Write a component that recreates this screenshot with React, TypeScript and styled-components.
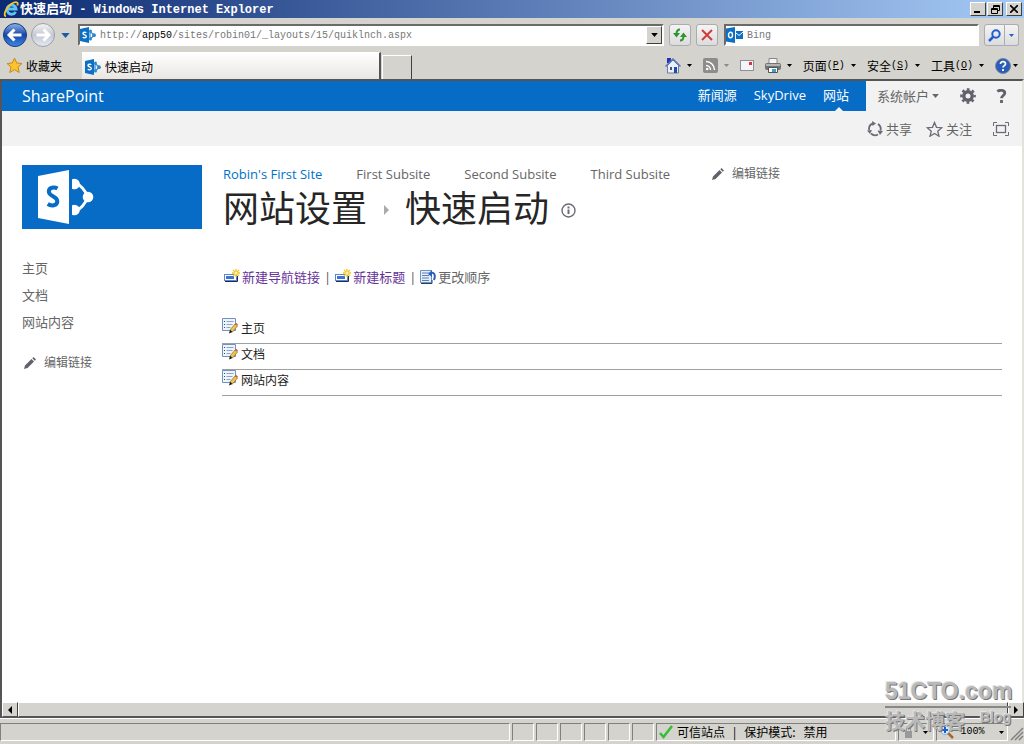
import React from "react";
import styled, { createGlobalStyle, css } from "styled-components";

const uiFont = `"Noto Sans CJK SC", "Liberation Sans", sans-serif`;
const webFont = `"Open Sans", "Noto Sans CJK SC", sans-serif`;
const monoFont = `"Liberation Mono", "Noto Sans CJK SC", monospace`;
const blue = "#066cc6";
const face = "#d4d3cd";

const Global = createGlobalStyle`
  * { box-sizing: border-box; }
  body { margin: 0; background: ${face}; font: 12px/16px ${uiFont}; color: #000; }
  button { font: inherit; color: inherit; padding: 0; border: 0; background: none; }
  a { color: inherit; text-decoration: none; }
  ul { list-style: none; margin: 0; padding: 0; }
  svg { display: block; flex: none; }
`;

const Window = styled.div`
  min-height: 100vh;
  display: flex;
  flex-direction: column;
`;

/* ---------- browser chrome ---------- */

const TitleBar = styled.header`
  height: 18px;
  padding: 0 2px 0 3px;
  display: flex;
  align-items: center;
  gap: 1px;
  color: #fff;
  font-weight: bold;
  white-space: pre;
  background: linear-gradient(90deg, #0c2a72, #a6caf6);
`;
const TitleText = styled.h2`
  flex: 1;
  margin: 0;
  font: bold 12px/18px ${monoFont};
  span { font: bold 13px/18px ${uiFont}; }
`;
const CaptionButton = styled.button<{ $apart?: boolean }>`
  width: 16px;
  height: 14px;
  margin-left: ${(p) => (p.$apart ? 2 : 0)}px;
  display: grid;
  place-items: center;
  background: ${face};
  border: 1px solid;
  border-color: #fff #404040 #404040 #fff;
`;

const AddressRow = styled.div`
  height: 34px;
  padding: 0 5px 0 2px;
  display: flex;
  align-items: center;
`;
const NavCluster = styled.div`
  display: flex;
  align-items: center;
  gap: 2px;
  margin-right: 5px;
`;
const RecentButton = styled.button`
  width: 15px;
  display: grid;
  place-items: center;
`;
const sunken = css`
  border: 2px solid;
  border-color: #6a6a6a #fff #fff #6a6a6a;
  background: #fff;
`;
const Field = styled.label<{ $width?: number }>`
  ${sunken}
  height: 22px;
  ${(p) => (p.$width ? `width: ${p.$width}px;` : "flex: 1;")}
  display: flex;
  align-items: center;
  gap: 4px;
  min-width: 0;
`;
const FieldInput = styled.input`
  flex: 1;
  min-width: 0;
  border: 0;
  outline: 0;
  padding: 2px 0 0;
  background: none;
  font: 10px/16px ${monoFont};
  color: #555;
  &::placeholder { color: #777; opacity: 1; }
`;
const UrlText = styled.div`
  flex: 1;
  padding-top: 2px;
  font: 10px/16px ${monoFont};
  color: #777;
  b { font-weight: normal; color: #000; }
`;
const DropButton = styled.button`
  width: 16px;
  height: 18px;
  display: grid;
  place-items: center;
  background: ${face};
  border: 1px solid;
  border-color: #fff #404040 #404040 #fff;
`;
const PageButtons = styled.div`
  display: flex;
  gap: 5px;
  margin: 0 6px 0 5px;
`;
const SoftButton = styled.button`
  height: 22px;
  width: 22px;
  display: grid;
  place-items: center;
  border: 1px solid #a9abb5;
  border-radius: 3px;
  background: linear-gradient(#f4f4f4, #dcdcdc);
`;
const SearchButtons = styled.div`
  display: flex;
  margin-left: 5px;
`;
const SearchPart = styled.button<{ $width: number }>`
  width: ${(p) => p.$width}px;
  height: 22px;
  display: grid;
  place-items: center;
  border: 1px solid #a9abb5;
  background: linear-gradient(#f4f4f4, #dcdcdc);
  &:first-child { border-radius: 3px 0 0 3px; }
  &:last-child { border-radius: 0 3px 3px 0; border-left: 0; }
`;

const TabRow = styled.div`
  height: 27px;
  padding: 0 6px;
  display: flex;
  align-items: center;
`;
const Favorites = styled.button`
  width: 76px;
  display: flex;
  align-items: center;
  gap: 3px;
`;
const Tab = styled.button`
  width: 299px;
  height: 27px;
  padding: 2px 0 0 3px;
  display: flex;
  align-items: center;
  gap: 4px;
  border-right: 2px solid #555;
  border-top: 1px solid #fff;
  background: linear-gradient(#fff, #e8e6e2);
`;
const NewTab = styled.button`
  width: 30px;
  height: 24px;
  margin-left: 1px;
  align-self: flex-end;
  border: 1px solid #fff;
  border-right: 1px solid #404040;
  border-bottom: 0;
`;
const Commands = styled.div`
  flex: 1;
  display: flex;
  align-items: center;
  justify-content: flex-end;
  gap: 11px;
`;
const Command = styled.button<{ $tight?: boolean }>`
  display: flex;
  align-items: center;
  gap: ${(p) => (p.$tight ? 2 : 6)}px;
  white-space: nowrap;
`;
const AccessKey = styled.span`
  font: 10px/16px ${monoFont};
`;
const MenuLabel = styled.span`
  display: flex;
  align-items: center;
`;

/* ---------- SharePoint page ---------- */

const Viewport = styled.div`
  flex: 1;
  display: flex;
  flex-direction: column;
  background: #fff;
  border: solid #555;
  border-width: 2px 0 0 2px;
  border-right: 2px solid #e4e2dc;
`;
const Suite = styled.div`
  height: 30px;
  display: flex;
  background: ${blue};
  color: #fff;
`;
const Brand = styled.a`
  flex: 1;
  padding-left: 20px;
  font: 16px/30px ${webFont};
`;
const SuiteLinks = styled.nav`
  display: flex;
  gap: 17px;
  padding-right: 17px;
  font: 13px/28px ${webFont};
`;
const SuiteLink = styled.a<{ $active?: boolean }>`
  position: relative;
  ${(p) =>
    p.$active &&
    css`
      &::after {
        content: "";
        position: absolute;
        left: 50%;
        bottom: 0;
        margin-left: -1px;
        border: 4px solid transparent;
        border-top: 0;
        border-bottom-color: #f2f2f2;
      }
    `}
`;
const Account = styled.div`
  width: 156px;
  padding: 0 15px 0 11px;
  display: flex;
  align-items: center;
  justify-content: space-between;
  background: #f2f2f2;
  color: #666;
  font: 13px/28px ${webFont};
`;
const IconButton = styled.button`
  display: flex;
  align-items: center;
  gap: 3px;
`;
const Ribbon = styled.div`
  height: 35px;
  padding: 0 13px;
  display: flex;
  align-items: center;
  justify-content: flex-end;
  gap: 14px;
  background: #f2f2f2;
  color: #666;
  font: 13px/18px ${webFont};
`;
const Focus = styled(IconButton)`
  margin-left: 7px;
`;

const Page = styled.div`
  flex: 1;
  display: grid;
  grid-template-columns: 180px 1fr;
  grid-template-rows: auto 1fr;
  column-gap: 20px;
  padding: 16px 20px 20px;
  color: #666;
  font: 13px/18px ${webFont};
`;
const Logo = styled.a`
  height: 64px;
  margin-top: 3px;
  padding-left: 15px;
  display: flex;
  align-items: center;
  background: ${blue};
`;
const TopNav = styled.nav`
  display: flex;
  gap: 34px;
  padding-left: 1px;
  font: 13px/24px ${webFont};
`;
const TopLink = styled.a<{ $current?: boolean }>`
  color: ${(p) => (p.$current ? "#0072c6" : "#666")};
`;
const EditLink = styled.a<{ $indent: number }>`
  margin-left: ${(p) => p.$indent}px;
  display: flex;
  align-items: center;
  gap: 8px;
  font-size: 12px;
`;
const PageTitle = styled.h1`
  margin: 0;
  padding-left: 1px;
  display: flex;
  align-items: center;
  font: 36px/40px ${uiFont};
  color: #262626;
`;
const Crumb = styled.span`
  width: 38px;
  padding-top: 8px;
  display: grid;
  place-items: center;
`;
const Info = styled.button`
  padding: 8px 0 0 12px;
`;
const Side = styled.aside`
  padding-top: 26px;
  line-height: 27px;
  ul { margin-bottom: 13px; }
`;
const Main = styled.main`
  padding-top: 38px;
`;
const Actions = styled.div`
  height: 20px;
  padding-left: 2px;
  display: flex;
  align-items: center;
  gap: 4px;
  color: #555;
`;
const Action = styled.a<{ $visited?: boolean }>`
  display: flex;
  align-items: center;
  gap: 2px;
  color: ${(p) => (p.$visited ? "#663399" : "#666")};
`;
const Items = styled.ul`
  margin-top: 31px;
  color: #222;
`;
const Item = styled.li`
  height: 26px;
  border-bottom: 1px solid #a0a0a0;
  a { display: flex; gap: 3px; font-size: 12px; line-height: 22px; }
`;

/* ---------- bottom of the window ---------- */

const Frame = styled.div`
  position: relative;
`;
const ScrollBar = styled.div`
  height: 16px;
  display: flex;
  border-left: 2px solid #555;
  border-bottom: 1px solid #555;
`;
const Raised = styled.button<{ $grow?: boolean }>`
  ${(p) => (p.$grow ? "flex: 1;" : "width: 16px;")}
  display: grid;
  place-items: center;
  background: ${face};
  border: 1px solid;
  border-color: #fff #404040 #555 #fff;
`;
const StatusBar = styled.footer`
  height: 26px;
  padding: 4px 0 3px;
  display: flex;
  border-top: 1px solid #fff;
`;
const Panel = styled.div<{ $width?: number }>`
  ${(p) => (p.$width ? `width: ${p.$width}px;` : "flex: 1;")}
  display: flex;
  align-items: center;
  margin-right: 2px;
  border: 1px solid;
  border-color: #808080 #fff #fff #808080;
  white-space: nowrap;
`;
const Zone = styled(Panel)`
  gap: 8px;
`;
const ZoneName = styled.span`
  display: flex;
  align-items: center;
  gap: 4px;
  padding-left: 2px;
`;
const ZoomPanel = styled(Panel)`
  justify-content: space-around;
`;
const Percent = styled.span`
  margin-right: 8px;
  font: 10px/16px ${monoFont};
`;
const Watermark = styled.div`
  position: absolute;
  right: 13px;
  bottom: 10px;
  width: 126px;
  color: #b9b9b9;
  text-shadow: 1px 1px 0 #777, -1px -1px 0 #e4e4e4;
  font: bold 23px/30px "Liberation Sans", sans-serif;
  pointer-events: none;
  white-space: nowrap;
`;
const WatermarkSub = styled.div`
  display: flex;
  justify-content: space-between;
  border-top: 2px solid #888;
  font: bold 20px/26px "Noto Sans CJK SC", sans-serif;
  span { font: bold 14px/18px "Liberation Sans", sans-serif; }
`;

/* ---------- icons ---------- */

const Caret = ({ color = "#000", size = 5 }: { color?: string; size?: number }) => (
  <svg width={size} height={Math.ceil(size / 2)} viewBox="0 0 10 6"><path d="M0 0h10L5 6z" fill={color} /></svg>
);

const IeIcon = () => (
  <svg width="16" height="16" viewBox="0 0 16 16" fill="none">
    <path d="M12.6 10.8a4.600 4.600 0 1 1 .5-2.800H4.500" stroke="#5fc3f5" strokeWidth="2.800" />
    <path d="M3 15.500C-.8 14 4 4.500 11 1.500c3-1.200 4.500.3 3.300 3" stroke="#f6c52e" strokeWidth="1.800" />
  </svg>
);

const SharePointMark = () => (
  <svg width="16" height="16" viewBox="0 0 16 16">
    <path d="M0 2 9 0v16L0 14z" fill="#0b6fc4" />
    <path d="M6.300 5.800C5.500 5 3 4.900 3 6.400c0 1.600 3.300 1.300 3.300 3.100 0 1.600-2.500 1.600-3.600.8" fill="none" stroke="#fff" strokeWidth="1.400" />
    <path d="M10 4.500l4.500 3.700L10 12M10 4v8" fill="none" stroke="#2b88d0" strokeWidth="1.200" />
    <circle cx="10.500" cy="4" r="1.500" fill="#2b88d0" />
    <circle cx="14" cy="8.200" r="1.900" fill="#2b88d0" />
    <circle cx="10.500" cy="12" r="1.500" fill="#2b88d0" />
  </svg>
);

const SiteLogo = () => (
  <svg width="57" height="56" viewBox="0 0 57 56">
    <defs><clipPath id="nodes"><path d="M35 0h22v56H35z" /></clipPath></defs>
    <path d="M1 7 32 1v54L1 49z" fill="#fff" />
    <path d="M20.500 19.500c-3-1.700-8.700-1.500-8.700 3 0 5.200 8.500 4.300 8.500 9.800 0 4.600-6 5-9.600 2.700" fill="none" stroke={blue} strokeWidth="4" />
    <g clipPath="url(#nodes)" fill="#fff">
      <circle cx="37.500" cy="15" r="5.300" />
      <circle cx="37.500" cy="41" r="5.300" />
      <circle cx="51" cy="28" r="5.300" />
      <path d="M39 14c6 3 9 7 12 14-3 7-6 11-12 14" fill="none" stroke="#fff" strokeWidth="3" />
    </g>
  </svg>
);

const RoundArrow = ({ back }: { back?: boolean }) => (
  <svg width="26" height="26" viewBox="0 0 26 26">
    <defs>
      <linearGradient id={back ? "gb" : "gf"} x1="0" y1="0" x2="0" y2="1">
        <stop offset="0" stopColor={back ? "#8fb4ea" : "#f4f4f6"} />
        <stop offset=".5" stopColor={back ? "#1546a8" : "#c3c8d2"} />
        <stop offset="1" stopColor={back ? "#3f8be6" : "#e6ebf2"} />
      </linearGradient>
    </defs>
    <circle cx="13" cy="13" r="11.500" fill={`url(#${back ? "gb" : "gf"})`} stroke={back ? "#1b3c80" : "#9a9ea8"} />
    <path
      d={back ? "M19.500 13H8M12.500 7.500 7 13l5.500 5.500" : "M6.500 13H18M13.500 7.500 19 13l-5.500 5.500"}
      fill="none"
      stroke="#fff"
      strokeWidth="3"
    />
  </svg>
);

const Star = () => (
  <svg width="17" height="17" viewBox="0 0 17 17">
    <path d="m8.500 1 2.200 5 5.300.5-4 3.600 1.200 5.400-4.700-2.800-4.700 2.800L5 10.100 1 6.500 6.300 6z" fill="#fdc22f" stroke="#c98a17" />
  </svg>
);

const OutlookIcon = () => (
  <svg width="17" height="16" viewBox="0 0 17 16">
    <path d="M0 1.500 9 0v16L0 14.500zM10 4h7v8h-7z" fill="#0b6fc4" />
    <ellipse cx="4.500" cy="8" rx="2" ry="2.700" fill="none" stroke="#fff" strokeWidth="1.400" />
    <path d="m10 6 3 2.500L17 5" fill="none" stroke="#fff" />
  </svg>
);

const RefreshIcon = () => (
  <svg width="16" height="14" viewBox="0 0 16 14" fill="none" stroke="#2c9630" strokeWidth="2">
    <path d="M8 1.500C5.500 1.500 4.500 3 4.500 6M8 12.500c2.500 0 3.500-1.500 3.500-4.500" />
    <path d="M1 5h7L4.500 9.500zM8 9h7l-3.500-4.500z" fill="#2c9630" stroke="none" />
  </svg>
);
const StopIcon = () => (
  <svg width="12" height="12" viewBox="0 0 12 12"><path d="m1 1 10 10M11 1 1 11" stroke="#d23b3b" strokeWidth="2" /></svg>
);
const SearchIcon = () => (
  <svg width="13" height="13" viewBox="0 0 13 13" fill="none" stroke="#1f5fd0">
    <circle cx="8" cy="5" r="3.700" strokeWidth="2" /><path d="M5.500 7.500 1 12" strokeWidth="2.500" />
  </svg>
);

const HomeIcon = () => (
  <svg width="16" height="16" viewBox="0 0 16 16">
    <path d="M2 0h4v5H2z" fill="#2333b8" />
    <path d="M2.500 7.500 8 2l5.500 5.500V15h-11z" fill="#e8eefb" stroke="#6c7ca6" />
    <path d="M.5 8.500 8 1l7.500 7.500" fill="none" stroke="#5d77b4" strokeWidth="1.500" />
    <path d="M9 9h3v6H9z" fill="#1f4da6" /><path d="M5 9h2v3H5z" fill="#555" />
  </svg>
);
const RssIcon = () => (
  <svg width="15" height="15" viewBox="0 0 15 15">
    <rect width="15" height="15" rx="2" fill="#8c8c8c" />
    <g fill="none" stroke="#fff" strokeWidth="1.500"><path d="M3 7.500a4.500 4.500 0 0 1 4.500 4.500M3 3.500A8.500 8.500 0 0 1 11.500 12" /></g>
    <circle cx="4.200" cy="11" r="1.300" fill="#fff" />
  </svg>
);
const MailIcon = () => (
  <svg width="14" height="11" viewBox="0 0 14 11">
    <rect x=".5" y=".5" width="13" height="10" fill="#f5f5f8" stroke="#8f8f9c" /><path d="M9 2h3v3H9z" fill="#d8343f" />
  </svg>
);
const PrinterIcon = () => (
  <svg width="16" height="15" viewBox="0 0 16 15">
    <path d="M4 .5h8v5H4z" fill="#f6f6f6" stroke="#888" />
    <rect y="5" width="16" height="7" rx="2" fill="#747474" /><path d="M1 6h14v2H1z" fill="#b4b4b4" />
    <path d="M3.500 9.500h9v5h-9z" fill="#fff" stroke="#555" /><path d="M7 11h4v3H7z" fill="#3d9fd0" />
  </svg>
);
const HelpIcon = () => (
  <svg width="16" height="16" viewBox="0 0 16 16">
    <circle cx="8" cy="8" r="7.500" fill="#2a5cb8" stroke="#7486a8" />
    <path d="M5.500 6c0-3.500 5.200-3 5 0-.1 1.600-2.500 1.700-2.500 3.500M8 11v2" fill="none" stroke="#fff" strokeWidth="1.800" />
  </svg>
);

const GearIcon = () => (
  <svg width="16" height="16" viewBox="0 0 16 16" fill="none" stroke="#62606a">
    <circle cx="8" cy="8" r="4.200" strokeWidth="3.400" />
    <circle cx="8" cy="8" r="6.600" strokeWidth="2.400" strokeDasharray="2.700 2.484" strokeDashoffset="1.350" />
  </svg>
);
const QuestionIcon = () => (
  <svg width="11" height="14" viewBox="0 0 11 14" fill="none" stroke="#62606a" strokeWidth="2.800">
    <path d="M1.300 2.300c2.500-1.700 7.500-1.200 7.500 1.700C8.800 6.500 5.500 6.500 5.500 9.300M5.500 11v3" />
  </svg>
);
const ShareIcon = () => (
  <svg width="16" height="16" viewBox="0 0 16 16" fill="none" stroke="#6c6a76" strokeWidth="1.800">
    <path d="M6 2.300A6 6 0 0 0 2.200 9M4 12.500a6 6 0 0 0 7 1M13.500 9.500A6 6 0 0 0 11 3" />
    <path d="M5 0l4 2.500L5.500 5zM0 9.500l5-.5-2 4zM10.500 9.500l5.500.5-3 4z" fill="#6c6a76" stroke="none" />
  </svg>
);
const FollowIcon = () => (
  <svg width="17" height="16" viewBox="0 0 17 16">
    <path d="m8.500 1.500 2 4.800 5.300.4-4.100 3.500 1.300 5-4.500-2.700L4 15.200l1.300-5L1.200 6.700l5.300-.4z" fill="none" stroke="#6c6a76" strokeWidth="1.300" />
  </svg>
);
const FocusIcon = () => (
  <svg width="16" height="14" viewBox="0 0 16 14" fill="none" stroke="#6c6a76">
    <path d="M4 .5H.5V4M12 .5h3.500V4M4 13.500H.5V10M12 13.500h3.500V10" /><rect x="3.500" y="3.500" width="9" height="7" strokeWidth="1.300" />
  </svg>
);
const PencilIcon = () => (
  <svg width="12" height="12" viewBox="0 0 12 12">
    <path d="m0 12 1-3.500L7.500 2 10 4.500 3.500 11zM8.300 1.200 9.500 0 12 2.500l-1.200 1.200z" fill="#62606a" />
  </svg>
);
const InfoIcon = () => (
  <svg width="15" height="15" viewBox="0 0 15 15">
    <circle cx="7.500" cy="7.500" r="6.500" fill="none" stroke="#6c6a76" strokeWidth="1.400" />
    <path d="M6.500 3.500h2v2h-2zM6.500 6.500h2V11h-2z" fill="#6c6a76" />
  </svg>
);
const NewIcon = () => (
  <svg width="16" height="16" viewBox="0 0 16 16">
    <rect x=".5" y="5.500" width="12" height="6" fill="#fff" stroke="#5b86d0" />
    <path d="M2 7h8v3H2z" fill="#3f70d8" /><path d="M1 12.500h12.500V7" fill="none" stroke="#1f2b50" />
    <path d="M12 0v8M8 4h8M9 1l6 6M15 1 9 7" stroke="#f0c92c" strokeWidth="1.400" />
    <circle cx="12" cy="4" r="1.500" fill="#fff6b0" />
  </svg>
);
const ReorderIcon = () => (
  <svg width="16" height="16" viewBox="0 0 16 16">
    <path d="M.5 1.500h11v12H.5z" fill="#e4eefb" stroke="#7291bd" />
    <path d="M2 4h7M2 6.500h7M2 9h7M2 11.500h7" stroke="#5f7fae" />
    <path d="M1 14.500h11V11" fill="none" stroke="#27406b" />
    <path d="M10 4.500c4-2 6 1 4 6.500" fill="none" stroke="#2a5fc0" strokeWidth="2" /><path d="m8 5 4-4v7z" fill="#2a5fc0" />
  </svg>
);
const EditItemIcon = () => (
  <svg width="16" height="16" viewBox="0 0 16 16">
    <path d="M.5.500h13v12H.5z" fill="#edf4fc" stroke="#7291bd" />
    <path d="M4.500 3.500h7M4.500 6.500h6M4.500 9.500h4" stroke="#8ca4c8" /><path d="M2 3.500h1M2 6.500h1M2 9.500h1" stroke="#264f96" />
    <path d="m8 12 5-6 2.500 2-5 6z" fill="#f1c44c" stroke="#8b6b28" strokeWidth=".7" />
    <path d="m13 6 1-1.300 2 1.800-.8 1.300z" fill="#dd554c" /><path d="m8 12-1 3.500 3.500-1.500z" fill="#111" />
  </svg>
);
const CheckIcon = () => (
  <svg width="14" height="14" viewBox="0 0 14 14"><path d="m1 8 3.500 4L13 1" fill="none" stroke="#38bd36" strokeWidth="2.500" /></svg>
);
const LockIcon = () => (
  <svg width="9" height="12" viewBox="0 0 9 12"><path d="M1 5h7v7H1z" fill="#999" /><path d="M2.500 5V1h4v4" fill="none" stroke="#999" /></svg>
);
const ZoomIcon = () => (
  <svg width="14" height="14" viewBox="0 0 14 14" fill="none">
    <path d="m8 8 5 5" stroke="#a5672f" strokeWidth="2.500" /><circle cx="5" cy="5" r="4.500" fill="#d9ebff" stroke="#8ba9cc" />
    <path d="M5 2v6M2 5h6" stroke="#1663c9" strokeWidth="2" />
  </svg>
);
const Grip = () => (
  <svg width="14" height="18" viewBox="0 0 14 18" stroke="#808080" strokeWidth="1.500"><path d="M1 17 13 5M5 17l8-8M9 17l4-4" /></svg>
);
const SideArrow = ({ left }: { left?: boolean }) => (
  <svg width="4" height="8" viewBox="0 0 4 8"><path d={left ? "M4 0v8L0 4z" : "M0 0v8l4-4z"} /></svg>
);

const menus = [
  { label: "页面", key: "P" },
  { label: "安全", key: "S" },
  { label: "工具", key: "O" },
];
const subsites = ["First Subsite", "Second Subsite", "Third Subsite"];
const links = ["主页", "文档", "网站内容"];

export default function App() {
  return (
    <Window>
      <Global />
      <TitleBar>
        <IeIcon />
        <TitleText><span>快速启动</span> - Windows Internet Explorer</TitleText>
        <CaptionButton aria-label="最小化"><svg width="8" height="8"><path d="M0 6h6v2H0z" /></svg></CaptionButton>
        <CaptionButton aria-label="还原">
          <svg width="9" height="9" fill="none" stroke="#000"><path d="M2.500 3V.5h6v5H6M2 1.500h7M.5 3.500h6v5h-6zM0 4.500h7" /></svg>
        </CaptionButton>
        <CaptionButton $apart aria-label="关闭">
          <svg width="8" height="8"><path d="m0 0 8 8M8 0 0 8" stroke="#000" strokeWidth="1.600" /></svg>
        </CaptionButton>
      </TitleBar>

      <AddressRow>
        <NavCluster>
          <button aria-label="后退"><RoundArrow back /></button>
          <button aria-label="前进"><RoundArrow /></button>
          <RecentButton aria-label="最近的页面"><Caret color="#1c5ca0" size={9} /></RecentButton>
        </NavCluster>
        <Field as="div">
          <SharePointMark />
          <UrlText>http://<b>app50</b>/sites/robin01/_layouts/15/quiklnch.aspx</UrlText>
          <DropButton aria-label="显示地址"><Caret size={7} /></DropButton>
        </Field>
        <PageButtons>
          <SoftButton aria-label="刷新"><RefreshIcon /></SoftButton>
          <SoftButton aria-label="停止"><StopIcon /></SoftButton>
        </PageButtons>
        <Field $width={255}>
          <OutlookIcon />
          <FieldInput placeholder="Bing" aria-label="Bing" />
        </Field>
        <SearchButtons>
          <SearchPart $width={21} aria-label="搜索"><SearchIcon /></SearchPart>
          <SearchPart $width={14} aria-label="搜索选项"><Caret color="#1f5fd0" size={5} /></SearchPart>
        </SearchButtons>
      </AddressRow>

      <TabRow>
        <Favorites><Star />收藏夹</Favorites>
        <Tab><SharePointMark />快速启动</Tab>
        <NewTab aria-label="新选项卡" />
        <Commands>
          <Command aria-label="主页"><HomeIcon /><Caret /></Command>
          <Command aria-label="源"><RssIcon /><Caret color="#888" /></Command>
          <Command aria-label="邮件"><MailIcon /></Command>
          <Command aria-label="打印"><PrinterIcon /><Caret /></Command>
          {menus.map((m) => (
            <Command key={m.key}>
              <MenuLabel>{m.label}<AccessKey>(<u>{m.key}</u>)</AccessKey></MenuLabel><Caret />
            </Command>
          ))}
          <Command $tight aria-label="帮助"><HelpIcon /><Caret /></Command>
        </Commands>
      </TabRow>

      <Viewport>
        <Suite>
          <Brand href="#">SharePoint</Brand>
          <SuiteLinks>
            <SuiteLink href="#">新闻源</SuiteLink>
            <SuiteLink href="#">SkyDrive</SuiteLink>
            <SuiteLink href="#" $active>网站</SuiteLink>
          </SuiteLinks>
          <Account>
            <IconButton>系统帐户<Caret color="#666" size={7} /></IconButton>
            <IconButton aria-label="设置"><GearIcon /></IconButton>
            <IconButton aria-label="帮助"><QuestionIcon /></IconButton>
          </Account>
        </Suite>
        <Ribbon>
          <IconButton><ShareIcon />共享</IconButton>
          <IconButton><FollowIcon />关注</IconButton>
          <Focus aria-label="专注于内容"><FocusIcon /></Focus>
        </Ribbon>

        <Page>
          <Logo href="#" aria-label="SharePoint"><SiteLogo /></Logo>
          <div>
            <TopNav>
              <TopLink href="#" $current>Robin's First Site</TopLink>
              {subsites.map((s) => <TopLink href="#" key={s}>{s}</TopLink>)}
              <EditLink href="#" $indent={8}><PencilIcon />编辑链接</EditLink>
            </TopNav>
            <PageTitle>
              网站设置
              <Crumb><svg width="5" height="10"><path d="M0 0v10l5-5z" fill="#aaa" /></svg></Crumb>
              快速启动
              <Info aria-label="说明"><InfoIcon /></Info>
            </PageTitle>
          </div>
          <Side>
            <ul>{links.map((l) => <li key={l}><a href="#">{l}</a></li>)}</ul>
            <EditLink href="#" $indent={2}><PencilIcon />编辑链接</EditLink>
          </Side>
          <Main>
            <Actions>
              <Action href="#" $visited><NewIcon />新建导航链接</Action>|
              <Action href="#" $visited><NewIcon />新建标题</Action>|
              <Action href="#"><ReorderIcon />更改顺序</Action>
            </Actions>
            <Items>
              {links.map((l) => <Item key={l}><a href="#"><EditItemIcon />{l}</a></Item>)}
            </Items>
          </Main>
        </Page>
      </Viewport>

      <Frame>
        <ScrollBar>
          <Raised aria-label="向左"><SideArrow left /></Raised>
          <Raised $grow aria-label="滚动" />
          <Raised aria-label="向右"><SideArrow /></Raised>
        </ScrollBar>
        <StatusBar>
          <Panel />
          {[0, 1, 2, 3, 4, 5].map((n) => <Panel key={n} $width={22} />)}
          <Zone $width={240}>
            <ZoneName><CheckIcon />可信站点</ZoneName><span>|</span><span>保护模式:</span><span>禁用</span>
          </Zone>
          <ZoomPanel $width={36}><LockIcon /><Caret /></ZoomPanel>
          <ZoomPanel $width={72}><ZoomIcon /><Percent>100%</Percent><Caret /></ZoomPanel>
          <Grip />
        </StatusBar>
        <Watermark>
          51CTO.com
          <WatermarkSub>技术博客<span>Blog</span></WatermarkSub>
        </Watermark>
      </Frame>
    </Window>
  );
}
